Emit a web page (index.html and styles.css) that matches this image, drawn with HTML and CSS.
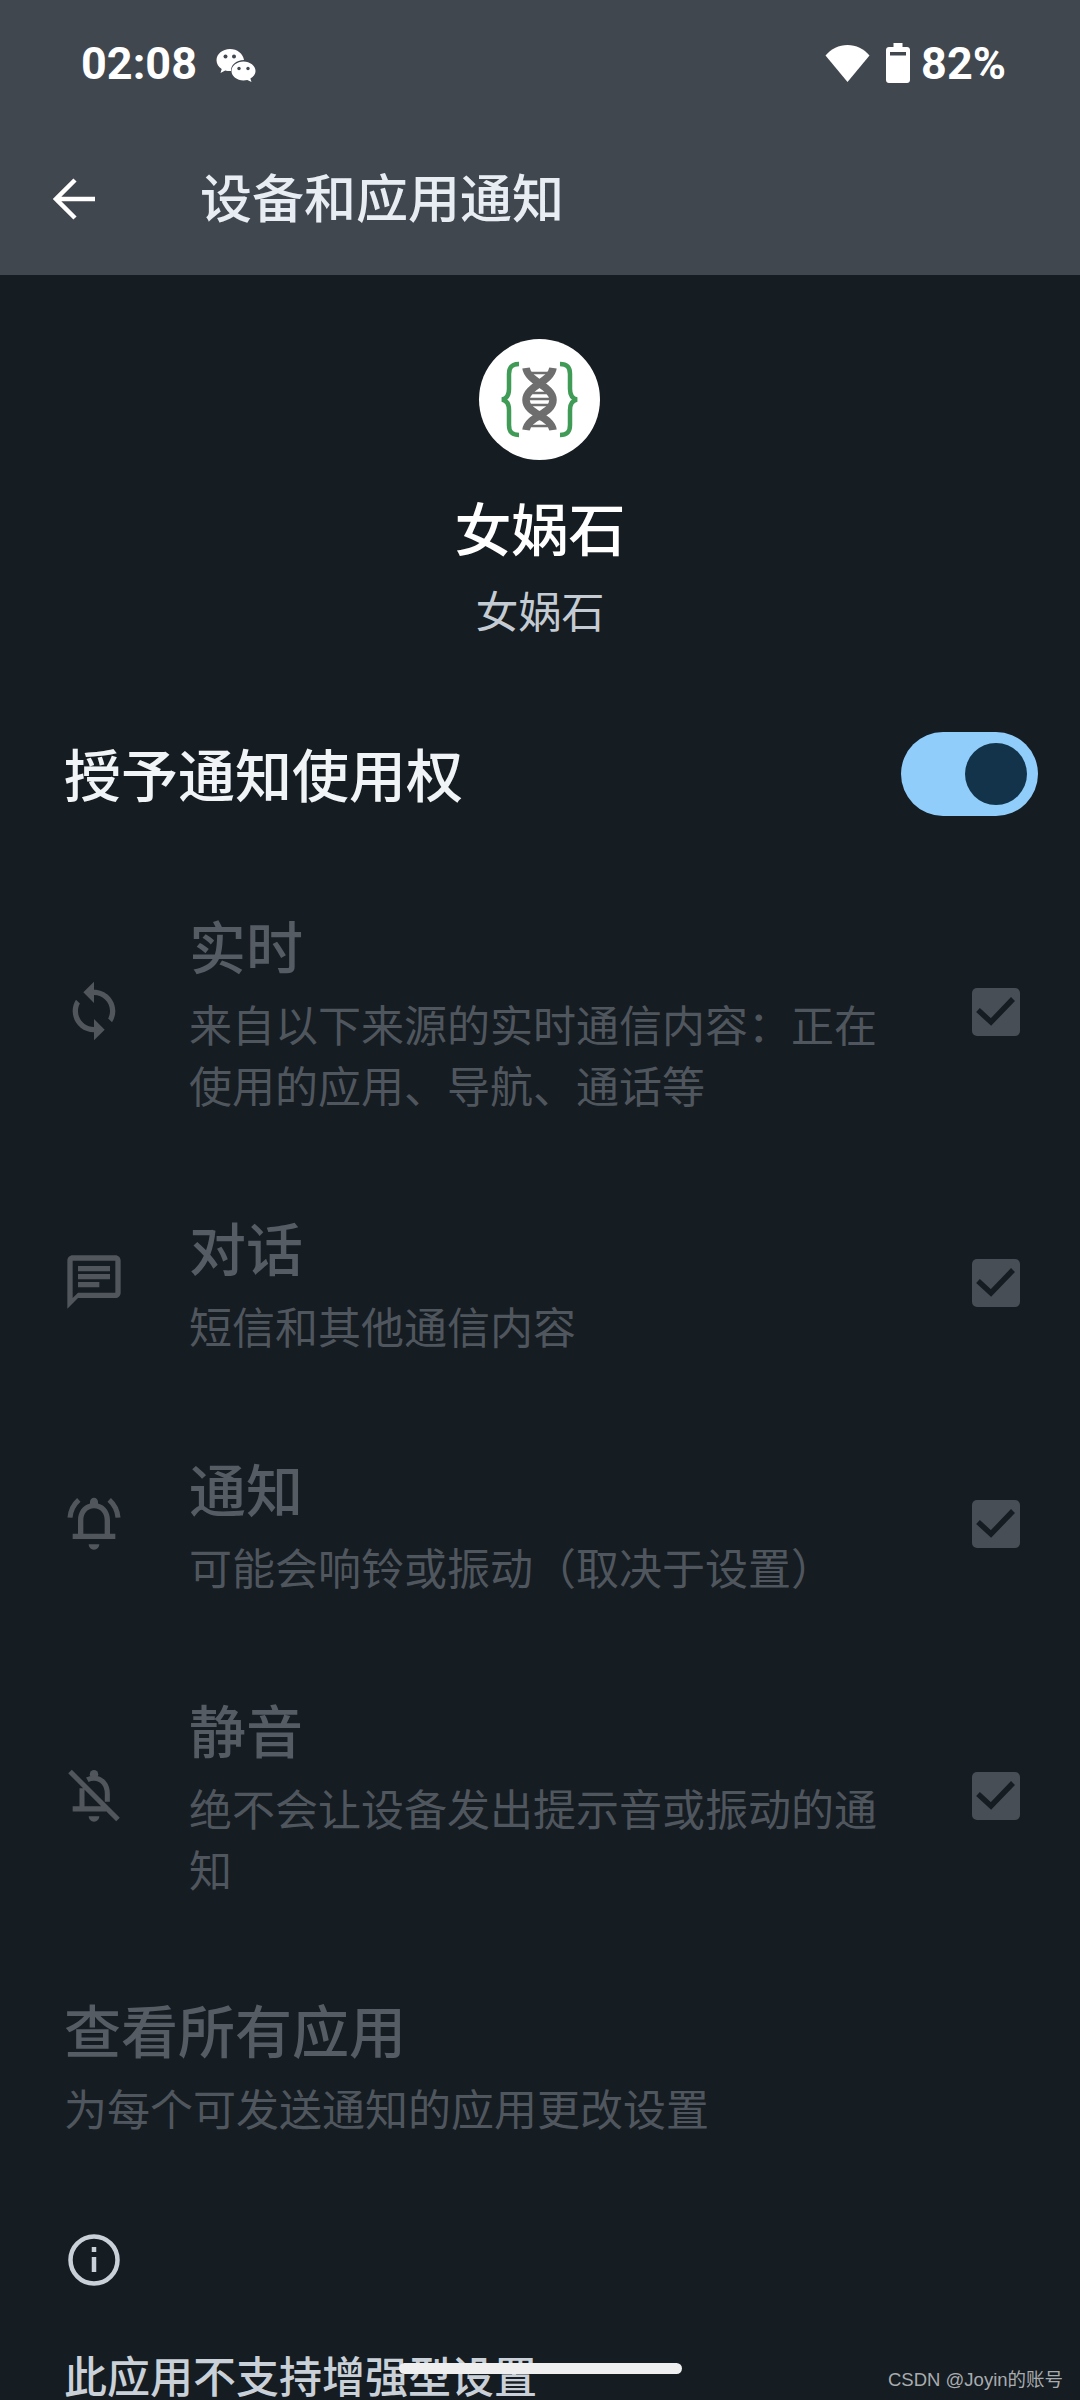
FILE: index.html
```html
<!DOCTYPE html>
<html lang="zh">
  <head>
    <meta charset="UTF-8" />
    <meta name="viewport" content="width=device-width, initial-scale=1.0" />
    <title>设备和应用通知</title>
    <link rel="stylesheet" href="styles.css">
  </head>
  <body>
    <header class="top">
      <div class="status">
        <span class="clock">02:08</span>
        <svg class="wechat" viewBox="0 0 40 33" fill="#fff">
          <path d="M14 0C6.500 0 .5 5 .5 11.200c0 3.600 2 6.700 5.200 8.800L4.500 24l4.700-2.600c1.500.4 3 .6 4.800.6h1C14.500 16.500 20 11 28 11c-.8-6.200-6.800-11-14-11z"/>
          <path d="M27.500 12.500c-6.500 0-12 4.300-12 9.500s5.500 9.500 12 9.500c1.300 0 2.600-.2 3.800-.5l4.200 2-1.100-3.500c3.200-1.800 5.100-4.500 5.100-7.500 0-5.200-5.500-9.500-12-9.500z"/>
          <g fill="#41474f">
            <circle cx="9.500" cy="7.500" r="2"/><circle cx="18" cy="7.500" r="2"/>
            <circle cx="23" cy="19.500" r="1.700"/><circle cx="32" cy="19.500" r="1.700"/>
          </g>
        </svg>
        <span class="status-space"></span>
        <svg class="wifi" viewBox="0 0 45 37" fill="#fff"><path d="M22.500 37 .500 10.500C6 4 14 0 22.500 0S39 4 44.500 10.500z"/></svg>
        <svg class="battery" viewBox="0 0 24 40"><path fill="#fff" d="M7.500 0h9v4H21c1.700 0 3 1.300 3 3v30c0 1.700-1.300 3-3 3H3c-1.700 0-3-1.300-3-3V7c0-1.700 1.300-3 3-3h4.500z"/><rect x="4" y="9" width="16" height="3.500" fill="#41474f"/></svg>
        <span class="percent">82%</span>
      </div>
      <div class="bar">
        <svg class="back" viewBox="0 0 42 42" fill="none" stroke="#fff" stroke-width="4.500"><path d="M42 21H4M22 2 3 21l19 19"/></svg>
        <h1 class="bar-title">设备和应用通知</h1>
      </div>
    </header>

    <main class="page">
      <section class="app">
        <div class="app-icon">
          <svg viewBox="0 0 121 121" width="121" height="121">
            <g fill="none" stroke="#3f9b55" stroke-width="4.500">
              <path d="M40 25c-7 0-10 3-10 10v15c0 6-2 9.500-7 10.500 5 1 7 4.500 7 10.500v15c0 7 3 10 10 10"/>
              <path d="M81 25c7 0 10 3 10 10v15c0 6 2 9.500 7 10.500-5 1-7 4.500-7 10.500v15c0 7-3 10-10 10"/>
            </g>
            <g fill="none" stroke="#6e6e6e" stroke-width="7.500">
              <path d="M47 29c2 14 27 18 27 32S49 77 47 91"/>
              <path d="M74 29c-2 14-27 18-27 32s25 16 27 30"/>
            </g>
            <path fill="none" stroke="#6e6e6e" stroke-width="2.500" d="M52 34h17M55 42h11M52 54h17M50 60h21M52 66h17M55 80h11M52 87h17"/>
          </svg>
        </div>
        <h2 class="app-name">女娲石</h2>
        <p class="app-sub">女娲石</p>
      </section>

      <div class="grant">
        <span class="grant-label">授予通知使用权</span>
        <span class="switch"><span class="knob"></span></span>
      </div>

      <div class="row">
        <svg class="row-icon" viewBox="0 0 24 24"><path d="M12 4V1L8 5l4 4V6c3.310 0 6 2.690 6 6 0 1.010-.25 1.970-.7 2.800l1.460 1.460C19.540 15.030 20 13.570 20 12c0-4.420-3.580-8-8-8zm0 14c-3.310 0-6-2.690-6-6 0-1.010.25-1.970.7-2.800L5.240 7.740C4.460 8.970 4 10.430 4 12c0 4.420 3.580 8 8 8v3l4-4-4-4v3z"/></svg>
        <div class="row-text">
          <div class="row-title">实时</div>
          <div class="row-sub">来自以下来源的实时通信内容：正在使用的应用、导航、通话等</div>
        </div>
        <span class="check"><svg viewBox="0 0 48 48"><path d="M6 22l13 12L41 11" /></svg></span>
      </div>

      <div class="row">
        <svg class="row-icon" viewBox="0 0 24 24"><path d="M20 2H4c-1.100 0-2 .9-2 2v18l4-4h14c1.100 0 2-.9 2-2V4c0-1.100-.9-2-2-2zm0 14H6l-2 2V4h16v12z"/><path d="M6 12h8v2H6zM6 9h12v2H6zM6 6h12v2H6z"/></svg>
        <div class="row-text">
          <div class="row-title">对话</div>
          <div class="row-sub">短信和其他通信内容</div>
        </div>
        <span class="check"><svg viewBox="0 0 48 48"><path d="M6 22l13 12L41 11" /></svg></span>
      </div>

      <div class="row">
        <svg class="row-icon" viewBox="0 0 24 24"><path d="M12 22c1.100 0 2-.9 2-2h-4c0 1.100.9 2 2 2zm6-6v-5c0-3.070-1.630-5.640-4.500-6.320V4c0-.83-.67-1.500-1.500-1.500s-1.500.67-1.500 1.500v.68C7.640 5.360 6 7.920 6 11v5l-2 0v2h16v-2h-2zm-2 0H8v-5c0-2.480 1.510-4.500 4-4.500s4 2.020 4 4.500v5z"/><path class="icon-line" d="M3 10c.2-2.700 1.400-5 3.300-6.700M21 10c-.2-2.700-1.400-5-3.300-6.700"/></svg>
        <div class="row-text">
          <div class="row-title">通知</div>
          <div class="row-sub">可能会响铃或振动（取决于设置）</div>
        </div>
        <span class="check"><svg viewBox="0 0 48 48"><path d="M6 22l13 12L41 11" /></svg></span>
      </div>

      <div class="row">
        <svg class="row-icon" viewBox="0 0 24 24"><path d="M10 20h4c0 1.100-.9 2-2 2s-2-.9-2-2z"/><circle cx="12" cy="4.200" r="1.600"/><path class="icon-line" d="M3 3.200l18 18M7.500 9.500V17M4 17.200h12.500M17 14.500V11.500c0-3.300-2-5.800-5-5.800-.9 0-1.800.2-2.500.6"/></svg>
        <div class="row-text">
          <div class="row-title">静音</div>
          <div class="row-sub">绝不会让设备发出提示音或振动的通知</div>
        </div>
        <span class="check"><svg viewBox="0 0 48 48"><path d="M6 22l13 12L41 11" /></svg></span>
      </div>

      <div class="all-apps">
        <div class="row-title">查看所有应用</div>
        <div class="row-sub">为每个可发送通知的应用更改设置</div>
      </div>

      <svg class="info" viewBox="0 0 52 52" fill="none" stroke="#c9d0d7" stroke-width="4.500"><circle cx="26" cy="26" r="23.500"/><path d="M26 23v15M26 13v5"/></svg>
      <p class="note">此应用不支持增强型设置</p>
    </main>

    <div class="home-bar"></div>
    <div class="watermark">CSDN @Joyin的账号</div>
  </body>
</html>
```

FILE: styles.css
```css
html, body {
  margin: 0;
  height: 2400px;
  overflow: hidden;
}
body {
  position: relative;
  font-family: "Noto Sans CJK SC", "Noto Sans", sans-serif;
  background: #151c22;
  color: #fff;
}
h1, h2, p {
  margin: 0;
  font-weight: 400;
}

.top {
  height: 275px;
  background: #41474f;
}
.status {
  display: flex;
  align-items: center;
  height: 126px;
  padding: 0 74px 0 81px;
  font-family: Roboto, sans-serif;
  font-weight: 700;
  font-size: 45px;
}
.wechat {
  width: 40px;
  height: 33px;
  margin-left: 19px;
  margin-top: 4px;
}
.status-space {
  flex: 1;
}
.wifi {
  width: 45px;
  height: 37px;
}
.battery {
  width: 24px;
  height: 40px;
  margin-left: 16px;
}
.percent {
  margin-left: 11px;
}
.bar {
  display: flex;
  align-items: center;
  height: 149px;
  padding-left: 53px;
}
.back {
  width: 42px;
  height: 42px;
  margin-bottom: 4px;
}
.bar-title {
  margin-left: 105px;
  margin-bottom: 10px;
  font-size: 52px;
  font-weight: 500;
  color: #e8edf3;
}

.app {
  display: flex;
  flex-direction: column;
  align-items: center;
  padding-top: 64px;
}
.app-icon {
  width: 121px;
  height: 121px;
  margin-right: 2px;
  border-radius: 50%;
  background: #fff;
}
.app-name {
  margin-top: 28px;
  font-size: 57px;
  font-weight: 500;
  line-height: 76px;
}
.app-sub {
  margin-top: 15px;
  font-size: 43px;
  line-height: 60px;
  color: #c4cbd2;
}

.grant {
  display: flex;
  align-items: center;
  justify-content: space-between;
  padding: 93px 42px 0 64px;
}
.grant-label {
  margin-bottom: 5px;
  font-size: 57px;
  font-weight: 500;
  line-height: 76px;
  color: #f1f4f7;
}
.switch {
  display: flex;
  align-items: center;
  justify-content: flex-end;
  box-sizing: border-box;
  width: 137px;
  height: 84px;
  padding-right: 11px;
  border-radius: 42px;
  background: #90cdfb;
}
.knob {
  width: 62px;
  height: 62px;
  border-radius: 50%;
  background: #12334a;
}

.row {
  display: flex;
  align-items: center;
  padding: 48px 60px 45px 62px;
}
.grant + .row {
  margin-top: 42px;
}
.row-icon {
  flex: none;
  width: 64px;
  height: 64px;
  fill: #50565c;
}
.icon-line {
  fill: none;
  stroke: #50565c;
  stroke-width: 1.900px;
}
.row-text {
  width: 700px;
  margin-left: 63px;
}
.row-title {
  font-size: 57px;
  font-weight: 500;
  line-height: 76px;
  color: #565c63;
}
.row-sub {
  margin-top: 11px;
  font-size: 43px;
  line-height: 61px;
  color: #50565d;
}
.check {
  display: block;
  width: 48px;
  height: 48px;
  margin-top: 2px;
  margin-left: auto;
  border-radius: 5px;
  background: #484e55;
}
.check svg {
  display: block;
  fill: none;
  stroke: #151c22;
  stroke-width: 5.500px;
}

.all-apps {
  padding: 46px 64px 0;
}
.info {
  display: block;
  width: 52px;
  height: 52px;
  margin: 96px 0 0 68px;
}
.note {
  margin: 64px 0 0 64px;
  font-size: 43px;
  font-weight: 500;
  line-height: 48px;
  color: #c9d0d7;
  white-space: nowrap;
}

.home-bar {
  position: absolute;
  left: 399px;
  top: 2363px;
  width: 283px;
  height: 11px;
  border-radius: 6px;
  background: #efefef;
}
.watermark {
  position: absolute;
  left: 888px;
  top: 2368px;
  font-family: "Liberation Sans", "Noto Sans CJK SC", sans-serif;
  font-size: 18.500px;
  line-height: 24px;
  color: #a9acaf;
  white-space: nowrap;
}
```
